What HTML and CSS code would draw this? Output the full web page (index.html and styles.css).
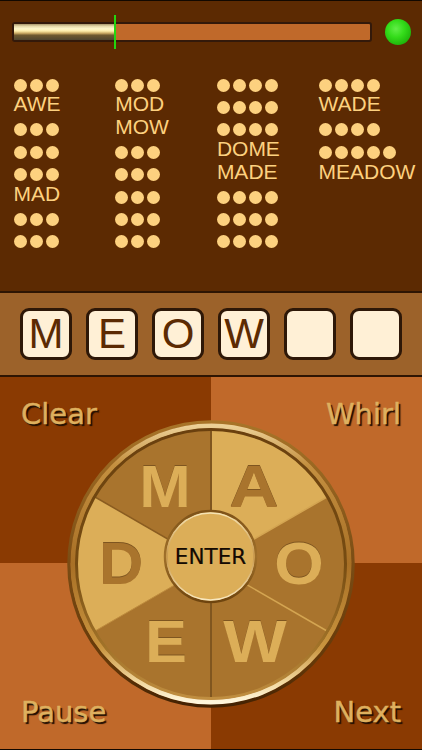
FILE: index.html
```html
<!DOCTYPE html>
<html lang="en">
<head>
<meta charset="utf-8">
<title>Word Whirl</title>
<link rel="stylesheet" href="styles.css">
</head>
<body>
<main class="app">
  <section class="top">
    <div class="meter">
      <div class="bar">
        <div class="bar-fill"></div>
        <div class="bar-mark"></div>
      </div>
      <div class="led"></div>
    </div>
    <div class="words">
      <div class="col">
        <div class="dots"><i></i><i></i><i></i></div>
        <div class="word">AWE</div>
        <div class="dots"><i></i><i></i><i></i></div>
        <div class="dots"><i></i><i></i><i></i></div>
        <div class="dots"><i></i><i></i><i></i></div>
        <div class="word">MAD</div>
        <div class="dots"><i></i><i></i><i></i></div>
        <div class="dots"><i></i><i></i><i></i></div>
      </div>
      <div class="col">
        <div class="dots"><i></i><i></i><i></i></div>
        <div class="word">MOD</div>
        <div class="word">MOW</div>
        <div class="dots"><i></i><i></i><i></i></div>
        <div class="dots"><i></i><i></i><i></i></div>
        <div class="dots"><i></i><i></i><i></i></div>
        <div class="dots"><i></i><i></i><i></i></div>
        <div class="dots"><i></i><i></i><i></i></div>
      </div>
      <div class="col">
        <div class="dots"><i></i><i></i><i></i><i></i></div>
        <div class="dots"><i></i><i></i><i></i><i></i></div>
        <div class="dots"><i></i><i></i><i></i><i></i></div>
        <div class="word">DOME</div>
        <div class="word">MADE</div>
        <div class="dots"><i></i><i></i><i></i><i></i></div>
        <div class="dots"><i></i><i></i><i></i><i></i></div>
        <div class="dots"><i></i><i></i><i></i><i></i></div>
      </div>
      <div class="col">
        <div class="dots"><i></i><i></i><i></i><i></i></div>
        <div class="word">WADE</div>
        <div class="dots"><i></i><i></i><i></i><i></i></div>
        <div class="dots"><i></i><i></i><i></i><i></i><i></i></div>
        <div class="word">MEADOW</div>
      </div>
    </div>
  </section>

  <section class="tray">
    <div class="tile">M</div>
    <div class="tile">E</div>
    <div class="tile">O</div>
    <div class="tile">W</div>
    <div class="tile"></div>
    <div class="tile"></div>
  </section>

  <section class="board">
    <div class="quad quad-dark quad-tl"><span class="action">Clear</span></div>
    <div class="quad quad-light quad-tr"><span class="action">Whirl</span></div>
    <div class="quad quad-light quad-bl"><span class="action">Pause</span></div>
    <div class="quad quad-dark quad-br"><span class="action">Next</span></div>

    <div class="wheel">
      <svg class="wheel-art" viewBox="0 0 288 288" width="288" height="288" aria-hidden="true">
        <defs>
          <linearGradient id="ringOuter" x1="0" y1="0" x2="0" y2="1">
            <stop offset="0" stop-color="#a87428"/>
            <stop offset="0.5" stop-color="#7a4c14"/>
            <stop offset="0.85" stop-color="#643808"/>
            <stop offset="1" stop-color="#442202"/>
          </linearGradient>
          <linearGradient id="ringMid" x1="0" y1="0" x2="0" y2="1">
            <stop offset="0" stop-color="#ecd096"/>
            <stop offset="0.14" stop-color="#c49040"/>
            <stop offset="0.5" stop-color="#a87026"/>
            <stop offset="0.8" stop-color="#c8943e"/>
            <stop offset="0.93" stop-color="#f2d9a0"/>
            <stop offset="1" stop-color="#fff6dc"/>
          </linearGradient>
          <linearGradient id="ringInner" x1="0" y1="0" x2="0" y2="1">
            <stop offset="0" stop-color="#6a400e"/>
            <stop offset="0.5" stop-color="#764c12"/>
            <stop offset="0.8" stop-color="#a07228"/>
            <stop offset="1" stop-color="#c08e40"/>
          </linearGradient>
          <linearGradient id="enterRing" x1="0" y1="0" x2="0" y2="1">
            <stop offset="0" stop-color="#7e5218"/>
            <stop offset="0.5" stop-color="#a0702a"/>
            <stop offset="1" stop-color="#6e440e"/>
          </linearGradient>
          <linearGradient id="enterGlow" x1="0" y1="0" x2="0" y2="1">
            <stop offset="0" stop-color="#f6e4b4"/>
            <stop offset="0.5" stop-color="#c8984c"/>
            <stop offset="1" stop-color="#f8e8c0"/>
          </linearGradient>
        </defs>
        <path class="sector-dark" d="M144 144 L144 10 A134 134 0 0 0 28 77 Z"/>
        <path class="sector-light" d="M144 144 L144 10 A134 134 0 0 1 260 77 Z"/>
        <path class="sector-dark" d="M144 144 L260 77 A134 134 0 0 1 260 211 Z"/>
        <path class="sector-dark" d="M144 144 L260 211 A134 134 0 0 1 144 278 Z"/>
        <path class="sector-dark" d="M144 144 L144 278 A134 134 0 0 1 28 211 Z"/>
        <path class="sector-light" d="M144 144 L28 211 A134 134 0 0 1 28 77 Z"/>
        <line class="spoke" x1="144" y1="144" x2="144" y2="10"/>
        <line class="spoke" x1="144" y1="144" x2="144" y2="278"/>
        <line class="spoke-thin" x1="144" y1="144" x2="28" y2="77"/>
        <line class="spoke-pale" x1="144" y1="144" x2="260" y2="77"/>
        <line class="spoke-pale" x1="144" y1="144" x2="260" y2="211"/>
        <line class="spoke-soft" x1="144" y1="144" x2="28" y2="211"/>
        <circle cx="144" cy="144" r="142" fill="none" stroke="url(#ringOuter)" stroke-width="3.500"/>
        <circle cx="144" cy="144" r="138" fill="none" stroke="url(#ringMid)" stroke-width="5"/>
        <circle cx="144" cy="144" r="134.500" fill="none" stroke="url(#ringInner)" stroke-width="3"/>
        <circle class="enter-base" cx="143.500" cy="136.500" r="44.500"/>
        <circle cx="143.500" cy="136.500" r="45.500" fill="none" stroke="url(#enterRing)" stroke-width="2.500"/>
        <circle cx="143.500" cy="136.500" r="43.500" fill="none" stroke="url(#enterGlow)" stroke-width="1.500"/>
      </svg>
      <span class="letter letter-m">M</span>
      <span class="letter letter-a">A</span>
      <span class="letter letter-o">O</span>
      <span class="letter letter-w">W</span>
      <span class="letter letter-e">E</span>
      <span class="letter letter-d">D</span>
      <span class="enter">ENTER</span>
    </div>
  </section>
</main>
</body>
</html>
```

FILE: styles.css
```css
* { box-sizing: border-box; }

html, body {
  margin: 0;
  padding: 0;
  width: 422px;
  height: 750px;
  overflow: hidden;
  background: #5c2a02;
}

.app {
  width: 422px;
  height: 750px;
  display: flex;
  flex-direction: column;
  font-family: "Liberation Sans", Arial, sans-serif;
}

/* top panel */
.top {
  height: 293px;
  flex: none;
  background: #5c2a02;
  border-top: 1px solid #120800;
  border-bottom: 2px solid #2e1503;
}

.meter {
  display: flex;
  align-items: center;
  gap: 13px;
  padding: 18px 0 0 12px;
  height: 44px;
}

.bar {
  position: relative;
  width: 360px;
  height: 20px;
  background: #c0692a;
  border: 2px solid #33190a;
  border-radius: 3px;
}

.bar-fill {
  width: 100px;
  height: 100%;
  background: linear-gradient(to bottom,
    #a8966a 0%, #e6d8a8 14%, #fff8cc 30%, #fdeeaa 44%,
    #c8a862 58%, #6e5a30 70%, #4f4630 100%);
}

.bar-mark {
  position: absolute;
  left: 99.500px;
  top: -9px;
  width: 2px;
  height: 34px;
  background: #22d60e;
}

.led {
  width: 26px;
  height: 26px;
  border-radius: 50%;
  background: radial-gradient(circle at 42% 38%, #62ee48 0%, #34dc1a 38%, #20b80c 72%, #128a04 100%);
}

.words {
  display: grid;
  grid-template-columns: repeat(4, 101.7px);
  padding: 29px 0 0 13.5px;
}

.col {
  display: flex;
  flex-direction: column;
}

.dots {
  height: 22.4px;
  display: flex;
  align-items: center;
  gap: 3px;
}

.dots i {
  width: 13px;
  height: 13px;
  border-radius: 50%;
  background: #fdd17f;
}

.word {
  height: 22.4px;
  padding-bottom: 6.8px;
  font-size: 21px;
  line-height: 15.6px;
  color: #fdd17f;
  white-space: nowrap;
}

/* answer tray */
.tray {
  height: 84px;
  flex: none;
  display: flex;
  gap: 14px;
  padding: 15px 0 0 20px;
  background: #9c622a;
  border-bottom: 2px solid #2e1503;
}

.tile {
  width: 52px;
  height: 52px;
  display: flex;
  align-items: center;
  justify-content: center;
  background: #fff0d6;
  border: 3px solid #2e1808;
  border-radius: 9px;
  font-size: 42px;
  line-height: 1;
  color: #5c2a02;
}

/* board */
.board {
  position: relative;
  flex: 1;
  display: grid;
  grid-template-columns: 211px 211px;
  grid-template-rows: 186px 186px;
  border-bottom: 1px solid #120800;
}

.quad {
  display: flex;
  padding: 19px 21px;
}

.quad-dark { background: #8a3a02; }
.quad-light { background: #c0692a; }
.quad-tr { justify-content: flex-end; }
.quad-bl { align-items: flex-end; }
.quad-br { justify-content: flex-end; align-items: flex-end; }

.action {
  font-family: "DejaVu Sans", sans-serif;
  font-size: 29px;
  line-height: 36px;
  color: #deb05e;
  -webkit-text-stroke: 0.4px #deb05e;
  text-shadow: 2px 2px 1px #1f0f03;
}

.wheel {
  position: absolute;
  left: 67px;
  top: 43px;
  width: 288px;
  height: 288px;
}

.wheel-art { display: block; }

.sector-dark { fill: #a9742d; }
.sector-light { fill: #dcae58; }
.spoke { stroke: #80561f; stroke-width: 2; }
.spoke-thin { stroke: #8a5c20; stroke-width: 1.5; }
.spoke-pale { stroke: #d4a552; stroke-width: 1.5; }
.spoke-soft { stroke: #bd8c3e; stroke-width: 1; }
.enter-base { fill: #dcae58; }

.letter {
  position: absolute;
  width: 80px;
  height: 60px;
  display: flex;
  align-items: center;
  justify-content: center;
  font-weight: bold;
  font-size: 60px;
  line-height: 60px;
  text-shadow: 0 -1.5px 0.5px #7e5520;
}

.letter-m { left: 58px; top: 37px; color: #dcae58; transform: scaleX(1.03); }
.letter-a { left: 147px; top: 37px; color: #a9742d; transform: scaleX(1.15); }
.letter-o { left: 192px; top: 114px; color: #dcae58; transform: scaleX(1.06); }
.letter-d { left: 14px; top: 114px; color: #a9742d; transform: scaleX(1.02); }
.letter-e { left: 59px; top: 192px; color: #dcae58; transform: scaleX(1.05); }
.letter-w { left: 148px; top: 192px; color: #dcae58; transform: scaleX(1.12); }

.enter {
  position: absolute;
  left: 98.500px;
  top: 122px;
  width: 90px;
  height: 30px;
  display: flex;
  align-items: center;
  justify-content: center;
  font-family: "DejaVu Sans", sans-serif;
  font-size: 21.500px;
  line-height: 30px;
  color: #140a02;
  -webkit-text-stroke: 0.2px #140a02;
}
```
